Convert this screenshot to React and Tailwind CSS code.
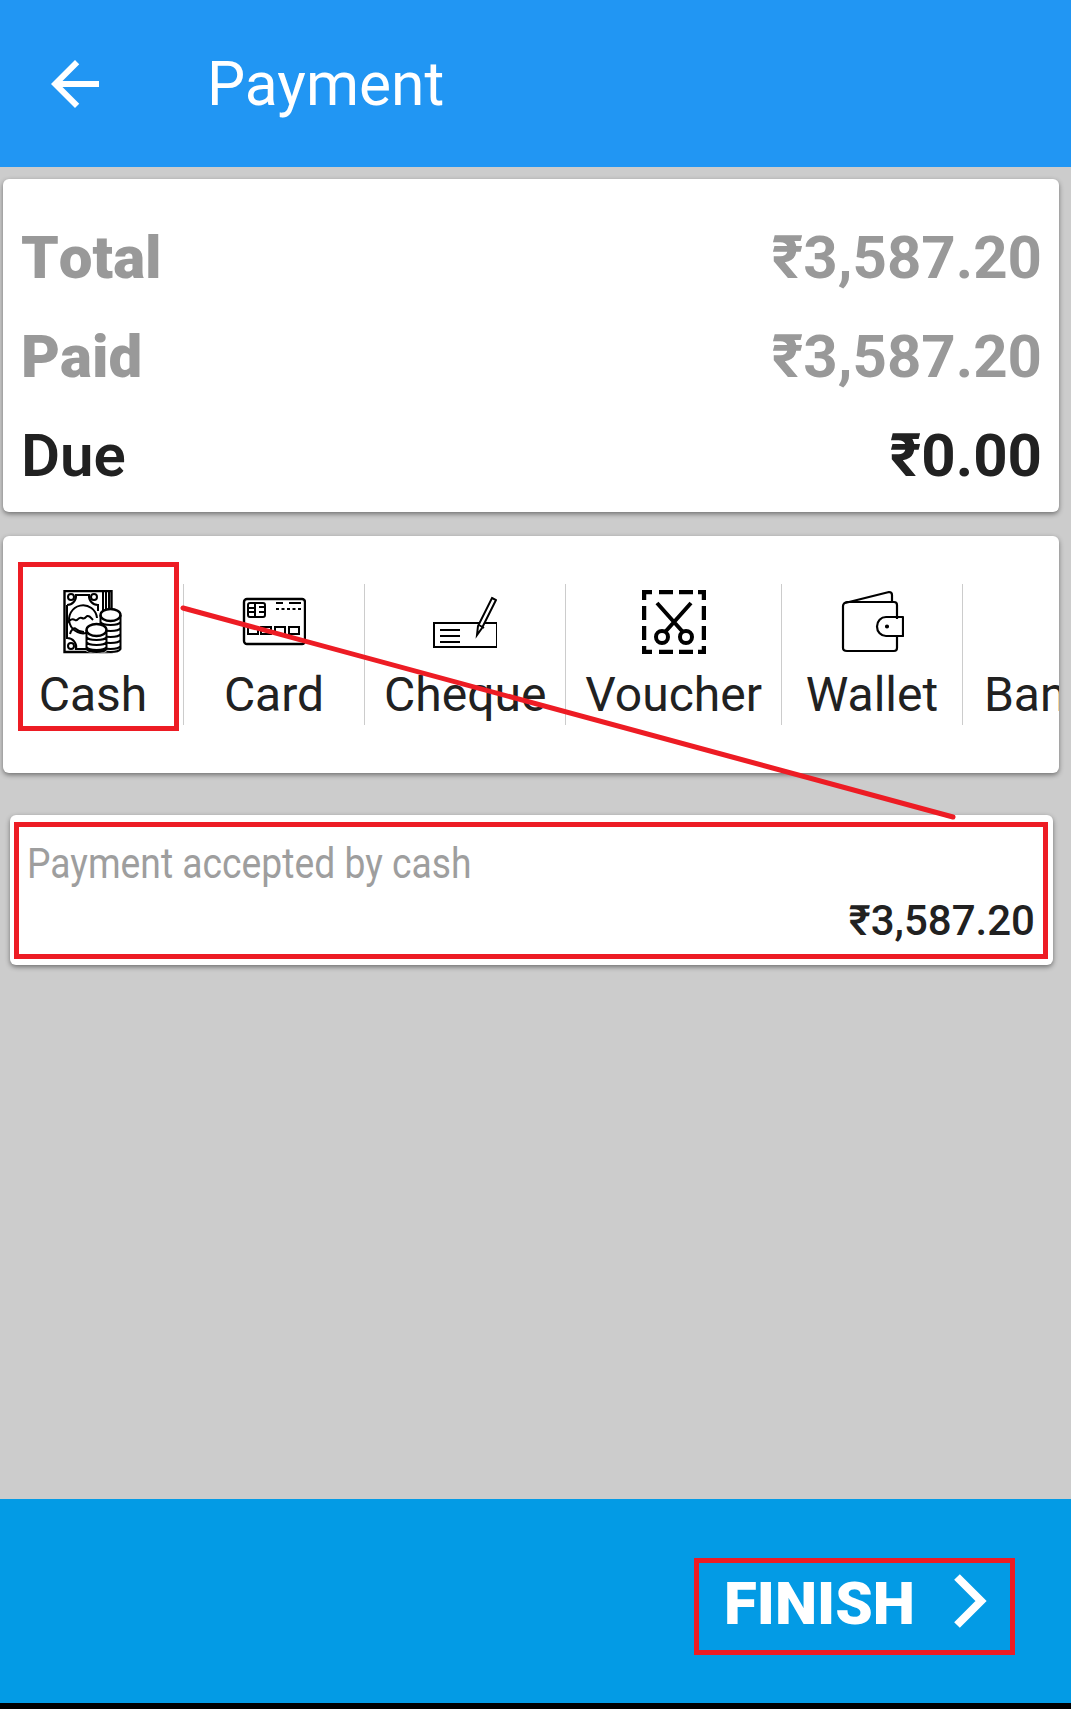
import React from 'react'

const CashIcon = () => (
  <svg viewBox="0 0 64 64" className="w-16 h-16" fill="none" stroke="#000" strokeWidth="2">
    <path d="M3.500 1h47v61h-47z" strokeWidth="2.400" />
    <path d="M42 1v24M45 1v22M48 1v22" />
    <path d="M6 15a9 9 0 0 0 9-10h13a9 9 0 0 0 9 10v6M6 15v33a9 9 0 0 1 9 11h12" />
    <circle cx="10" cy="7" r="3" />
    <circle cx="33" cy="7" r="3" />
    <circle cx="10" cy="56" r="3" />
    <path d="M28 42a14 14 0 1 1 8-14" />
    <path d="M6 33c3-3 5-5 8-3s3-4 7-2 4-3 6-2c2 0 4 3 5 4M9 44c1-4 4-7 6-5s5 3 8 3" />
    <path d="M39 25h21v36c-3 3-18 3-21 0z" fill="#fff" stroke="none" />
    <ellipse cx="49.500" cy="25" rx="10" ry="6" fill="#fff" strokeWidth="2.400" />
    <path d="M39.500 25v34c2 4 18 4 20 0V25M39.500 32c2 4 18 4 20 0M39.500 38c2 4 18 4 20 0M39.500 44c2 4 18 4 20 0M39.500 50c2 4 18 4 20 0M39.500 56c2 4 18 4 20 0" />
    <path d="M25 40h21v21c-3 3-18 3-21 0z" fill="#fff" stroke="none" />
    <ellipse cx="35.500" cy="40" rx="10" ry="6" fill="#fff" strokeWidth="2.400" />
    <path d="M25.500 40v19c2 4 18 4 20 0V40M25.500 47c2 4 18 4 20 0M25.500 52c2 4 18 4 20 0M25.500 57c2 4 18 4 20 0" />
  </svg>
)

const CardIcon = () => (
  <svg viewBox="0 0 64 64" className="w-16 h-16" fill="none" stroke="#000" strokeWidth="2">
    <rect x="2" y="9" width="61" height="45" rx="3" strokeWidth="2.400" />
    <rect x="6" y="13" width="17" height="14" rx="2" />
    <path d="M6 18h7M6 22h7M13 13v14M17 17h6M17 22h6" />
    <path d="M34 13h7M47 13h12" />
    <path d="M34 19h25" strokeDasharray="3 2.500" />
    <path d="M6 37h10v7H6zM19 37h10v7H19zM33 37h10v7H33zM47 37h10v7H47z" />
  </svg>
)

const ChequeIcon = () => (
  <svg viewBox="0 0 64 64" className="w-16 h-16" fill="none" stroke="#000" strokeWidth="2">
    <path d="M1 33h63v24H1z" fill="#fff" />
    <path d="M7 40h20M7 46h20M7 52h20" />
    <path d="M59 8l4 2-14 28-5 7 1-9z" fill="#fff" />
    <path d="M46 35l5 3" />
  </svg>
)

const VoucherIcon = () => (
  <svg viewBox="0 0 64 64" className="w-16 h-16" fill="none" stroke="#000">
    <path d="M2 10V2h8M17 2h14M37 2h14M56 2h6v8M62 16v14M62 36v14M62 56v6h-6M51 62H37M31 62H17M10 62H2v-6M2 50V36M2 30V16" strokeWidth="4.500" />
    <path d="M15 13l25 28M49 13L24 41" strokeWidth="4" />
    <circle cx="20" cy="47" r="6" strokeWidth="4" />
    <circle cx="44" cy="47" r="6" strokeWidth="4" />
  </svg>
)

const WalletIcon = () => (
  <svg viewBox="0 0 64 64" className="w-16 h-16" fill="none" stroke="#000" strokeWidth="2.200" strokeLinejoin="round">
    <path d="M5 13L49 2c2 0 3 1 3 3v8" />
    <path d="M57 29V15c0-2-1-3-3-3H7c-2 0-4 2-4 4v42c0 2 2 3 4 3h47c2 0 3-1 3-3V47" />
    <path d="M63 27H46c-5 0-9 4-9 9.500s4 9.500 9 9.500h17z" />
    <circle cx="47" cy="36.500" r="1" fill="#000" />
  </svg>
)

const tabs = [
  { label: 'Cash', icon: <CashIcon /> },
  { label: 'Card', icon: <CardIcon /> },
  { label: 'Cheque', icon: <ChequeIcon /> },
  { label: 'Voucher', icon: <VoucherIcon /> },
  { label: 'Wallet', icon: <WalletIcon /> },
]

const totals = [
  { label: 'Total', value: '₹3,587.20', labelWeight: 'font-black', color: 'text-[#999999]' },
  { label: 'Paid', value: '₹3,587.20', labelWeight: 'font-black', color: 'text-[#999999]' },
  { label: 'Due', value: '₹0.00', labelWeight: 'font-semibold', color: 'text-[#212121]' },
]

export default function App() {
  return (
    <div className="relative flex flex-col h-[1709px] w-[1071px] overflow-hidden bg-[#cccccc] font-['Roboto',sans-serif]">
      {/* Header */}
      <header className="flex items-center h-[167px] pl-[39px] bg-[#2196f3] text-white">
        <svg viewBox="0 0 24 24" className="w-[72px] h-[72px]" fill="#fff">
          <path d="M20 11H7.830l5.590-5.590L12 4l-8 8 8 8 1.410-1.410L7.830 13H20v-2z" />
        </svg>
        <h1 className="ml-[96px] mt-[2px] text-[60.500px] leading-[70px] font-normal">Payment</h1>
      </header>

      <main className="flex-1">
        {/* Totals */}
        <section className="mt-[12px] ml-[3px] mr-[12px] pt-[29px] pb-[7px] pl-[18px] pr-[17px] bg-white rounded-[6px] shadow-[0_2px_5px_rgba(0,0,0,0.45)]">
          {totals.map(row => (
            <div key={row.label} className={`flex justify-between text-[60px] leading-[99px] font-bold ${row.color}`}>
              <span className={`[font-kerning:none] ${row.labelWeight}`}>{row.label}</span>
              <span>{row.value}</span>
            </div>
          ))}
        </section>

        {/* Payment methods */}
        <section className="relative mt-[24px] ml-[3px] mr-[12px] pt-[48px] pb-[48px] bg-white rounded-[6px] shadow-[0_2px_5px_rgba(0,0,0,0.45)] overflow-hidden">
          <div className="flex">
            {tabs.map(tab => (
              <div key={tab.label} className="flex flex-col items-center shrink-0 min-w-[181px] h-[141px] pt-[6px] px-[19px] border-r border-[#cccccc]">
                {tab.icon}
                <span className="mt-[13px] text-[48px] leading-[56px] text-[#212121]">{tab.label}</span>
              </div>
            ))}
            <div className="shrink-0 pt-[6px] pl-[21px]">
              <div className="h-16" />
              <span className="block mt-[13px] text-[48px] leading-[56px] text-[#212121]">Bank</span>
            </div>
          </div>
          <div className="absolute left-[15px] top-[26px] w-[161px] h-[169px] border-[5px] border-[#ed1c24]" />
        </section>

        {/* Accepted payment */}
        <section className="relative mt-[42px] ml-[10px] mr-[18px] pt-[24px] pb-[20px] pl-[17px] pr-[18px] bg-white rounded-[6px] shadow-[0_2px_5px_rgba(0,0,0,0.45)]">
          <p className="text-[42px] leading-[49px] text-[#9e9e9e] whitespace-nowrap origin-left scale-x-[0.887]">Payment accepted by cash</p>
          <p className="mt-[8px] text-right text-[42px] leading-[49px] font-medium text-[#212121]">₹3,587.20</p>
          <div className="absolute left-[4px] right-[5px] top-[7px] bottom-[6px] border-[5px] border-[#ed1c24]" />
        </section>
      </main>

      {/* Footer */}
      <footer className="flex items-center justify-end h-[204px] pt-[11px] pr-[56px] bg-[#039be5]">
        <button className="flex items-center w-[321px] h-[97px] pl-[25px] pb-[6px] border-[5px] border-[#ed1c24] text-white">
          <span className="text-[60px] leading-[70px] font-black">FINISH</span>
          <svg viewBox="0 0 40 56" className="ml-[36px] mb-[6px] w-[40px] h-[56px]" fill="none" stroke="#fff" strokeWidth="8">
            <path d="M6 4l24 24L6 52" />
          </svg>
        </button>
      </footer>
      <div className="h-[6px] bg-black" />

      {/* Annotation line */}
      <svg viewBox="0 0 1071 1709" className="absolute inset-0 w-[1071px] h-[1709px] pointer-events-none">
        <path d="M183 608L953 817" stroke="#ed1c24" strokeWidth="5" strokeLinecap="round" />
      </svg>
    </div>
  )
}
